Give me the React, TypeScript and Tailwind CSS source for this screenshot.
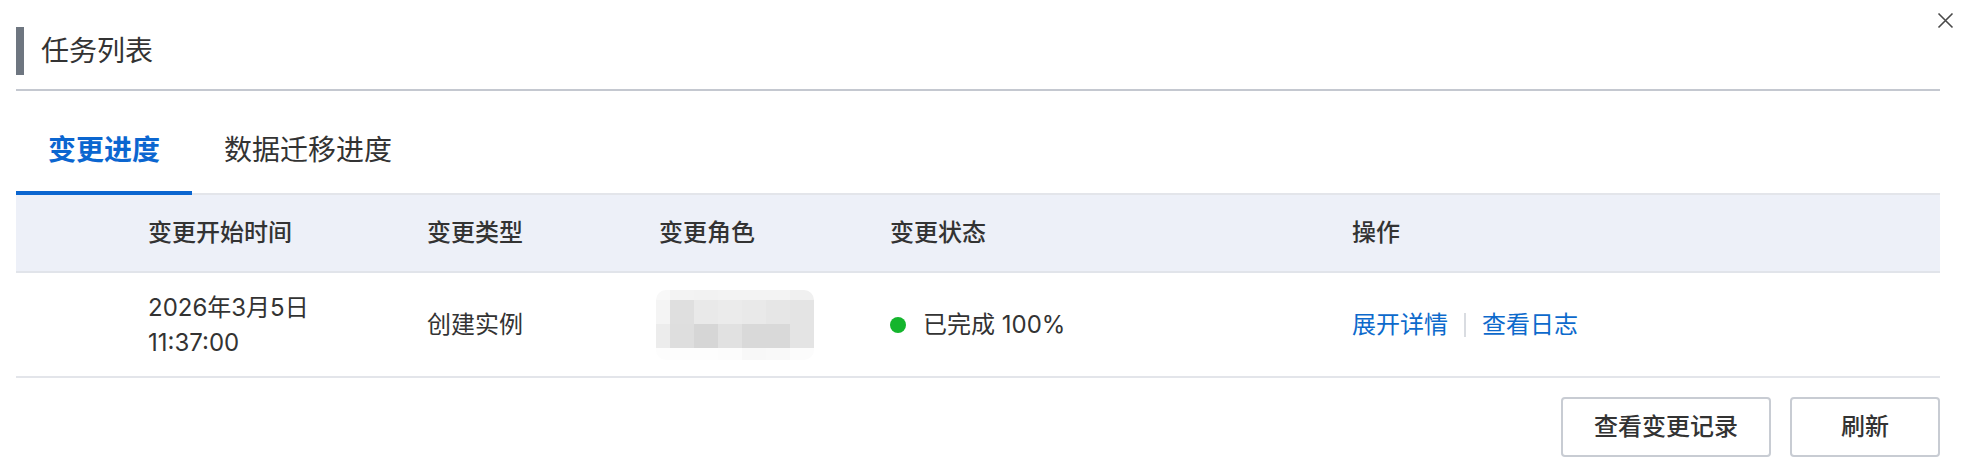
import React from "react";

const mosaic: string[][] = [
  ["bg-[#f8f8f8]", "bg-[#f3f3f3]", "bg-[#f2f2f2]", "bg-[#f3f3f3]", "bg-[#f3f3f3]", "bg-[#f3f3f3]", "bg-[#f0f0f0]"],
  ["bg-[#f4f4f4]", "bg-[#dfdfdf]", "bg-[#e9e9e9]", "bg-[#ebebeb]", "bg-[#e9e9e9]", "bg-[#e6e6e6]", "bg-[#e4e4e4]"],
  ["bg-[#ececec]", "bg-[#dedede]", "bg-[#d6d6d6]", "bg-[#e1e1e1]", "bg-[#d9d9d9]", "bg-[#d9d9d9]", "bg-[#e4e4e4]"],
  ["bg-[#fdfdfd]", "bg-[#fdfdfd]", "bg-[#fdfdfd]", "bg-[#fcfcfc]", "bg-[#f8f8f8]", "bg-[#f9f9f9]", "bg-[#fcfcfc]"],
];

function Mosaic() {
  return (
    <div className="grid h-[70px] w-[158px] grid-cols-[14px_24px_24px_24px_24px_24px_24px] grid-rows-[10px_24px_24px_12px] overflow-hidden rounded-[10px]">
      {mosaic.flatMap((row, r) => row.map((c, i) => <div key={`${r}-${i}`} className={c} />))}
    </div>
  );
}

export default function App() {
  const font = { fontFamily: 'Inter, "Noto Sans CJK SC", sans-serif' };
  return (
    <div className="relative h-[472px] w-[1968px] overflow-hidden bg-white text-[#333333]" style={font}>
      {/* close icon */}
      <div className="absolute left-[1937px] top-[12px] h-[17px] w-[17px]">
        <svg viewBox="0 0 17 17" width="17" height="17">
          <path d="M1.5 1.5 L15.5 15.5 M15.5 1.5 L1.5 15.5" stroke="#4a4a4a" strokeWidth="1.6" fill="none" />
        </svg>
      </div>

      <div className="pl-[16px] pr-[28px]">
        {/* title */}
        <div className="flex items-center pt-[27px]">
          <div className="h-[48px] w-[8px] bg-[#6e7680]" />
          <div className="ml-[17px] text-[28px] leading-[48px] text-[#333333]">任务列表</div>
        </div>
        <div className="mt-[14px] h-[2px] bg-[#c4c8d0]" />

        {/* tabs */}
        <div className="flex border-b-2 border-[#e3e5ea]">
          <div className="-mb-[2px] flex h-[104px] items-center border-b-4 border-[#0b66d0] px-[32px] pt-[18px] text-[28px] font-semibold text-[#0b66d0]">
            变更进度
          </div>
          <div className="-mb-[2px] flex h-[104px] items-center border-b-4 border-transparent px-[32px] pt-[18px] text-[28px] text-[#333333]">
            数据迁移进度
          </div>
        </div>

        {/* table header */}
        <div className="grid h-[78px] grid-cols-[132px_279px_232px_231px_462px_1fr] items-center border-b-2 border-[#e1e4ea] bg-[#edf0f8] text-[24px] font-medium text-[#333333]">
          <div />
          <div>变更开始时间</div>
          <div>变更类型</div>
          <div>变更角色</div>
          <div>变更状态</div>
          <div>操作</div>
        </div>

        {/* table row */}
        <div className="grid h-[105px] grid-cols-[132px_279px_232px_231px_462px_1fr] items-center border-b-2 border-[#e3e5ea] text-[24px] text-[#333333]">
          <div />
          <div className="leading-[35px]">
            <div>2026年3月5日</div>
            <div>11:37:00</div>
          </div>
          <div>创建实例</div>
          <div className="-ml-[3px]">
            <Mosaic />
          </div>
          <div className="flex items-center">
            <span className="h-[16px] w-[16px] rounded-full bg-[#14b52d]" />
            <span className="ml-[17px]">已完成 100%</span>
          </div>
          <div className="flex items-center text-[#0d6acc]">
            <span>展开详情</span>
            <span className="mx-[16px] h-[24px] w-[2px] bg-[#d9dce1]" />
            <span>查看日志</span>
          </div>
        </div>

        {/* buttons */}
        <div className="mt-[19px] flex justify-end gap-[19px]">
          <button className="flex h-[60px] w-[210px] items-center justify-center rounded-[4px] border-2 border-[#c8ccd3] bg-white text-[24px] font-medium text-[#333333]">
            查看变更记录
          </button>
          <button className="flex h-[60px] w-[150px] items-center justify-center rounded-[4px] border-2 border-[#c8ccd3] bg-white text-[24px] font-medium text-[#333333]">
            刷新
          </button>
        </div>
      </div>
    </div>
  );
}
